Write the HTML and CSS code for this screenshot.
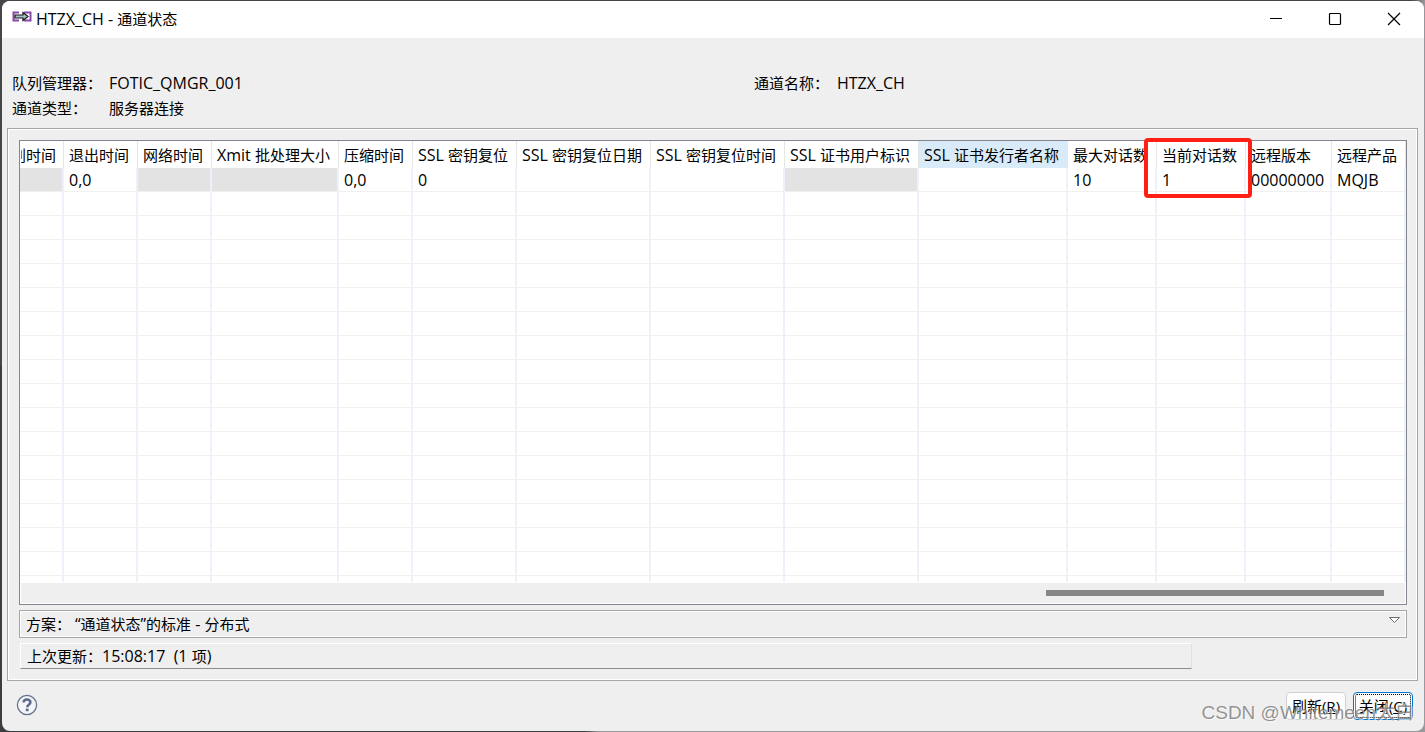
FILE: index.html
```html
<!DOCTYPE html>
<html lang="zh-CN">
<head>
<meta charset="utf-8">
<title>HTZX_CH - 通道状态</title>
<link rel="stylesheet" href="styles.css">
</head>
<body>
<main class="window">
  <header class="titlebar">
    <svg class="app-icon" width="20" height="12" viewBox="0 0 20 12" aria-hidden="true">
      <path d="M7 1.500H1.500V9.500H7M12 1.500H18.500V9.500H12" fill="none" stroke="#8a49a8" stroke-width="2"/>
      <path d="M3 4H11V1.500L16 5.500L11 9.500V7H3Z" fill="#a9bfc7" stroke="#161616" stroke-width="1.200"/>
    </svg>
    <h1 class="title"><span class="latin">HTZX_CH - </span>通道状态</h1>
    <div class="window-controls">
      <button type="button" class="control" aria-label="最小化"><svg width="14" height="14" viewBox="0 0 14 14"><path d="M1 6.500H13" stroke="#000"/></svg></button>
      <button type="button" class="control" aria-label="最大化"><svg width="14" height="14" viewBox="0 0 14 14"><rect x="1.500" y="1.500" width="11" height="11" rx="1" fill="none" stroke="#000" stroke-width="1.200"/></svg></button>
      <button type="button" class="control" aria-label="关闭窗口"><svg width="14" height="14" viewBox="0 0 14 14"><path d="M1 1L13 13M13 1L1 13" stroke="#000" stroke-width="1.200"/></svg></button>
    </div>
  </header>

  <section class="info">
    <dl class="facts">
      <dt>队列管理器：</dt><dd class="latin">FOTIC_QMGR_001</dd>
      <dt>通道类型：</dt><dd>服务器连接</dd>
    </dl>
    <dl class="facts facts-narrow">
      <dt>通道名称：</dt><dd class="latin">HTZX_CH</dd>
    </dl>
  </section>

  <section class="group">
    <div class="grid-frame">
      <div class="grid-view">
        <table class="grid">
          <colgroup>
            <col class="w44"><col class="w74"><col class="w74"><col class="w127"><col class="w74"><col class="w104">
            <col class="w134"><col class="w134"><col class="w134"><col class="w149"><col class="w89"><col class="w89"><col class="w86"><col>
          </colgroup>
          <thead>
            <tr>
              <th class="clipped"><div class="clip">别时间</div></th><th>退出时间</th><th>网络时间</th><th><span class="latin">Xmit </span>批处理大小</th><th>压缩时间</th><th><span class="latin">SSL </span>密钥复位</th>
              <th><span class="latin">SSL </span>密钥复位日期</th><th><span class="latin">SSL </span>密钥复位时间</th><th><span class="latin">SSL </span>证书用户标识</th><th class="hot"><span class="latin">SSL </span>证书发行者名称</th><th>最大对话数</th><th class="marked">当前对话数<span class="marker"></span></th><th>远程版本</th><th>远程产品</th>
            </tr>
          </thead>
          <tbody>
            <tr class="values">
              <td class="na"></td><td>0,0</td><td class="na"></td><td class="na"></td><td>0,0</td><td>0</td><td></td><td></td><td class="na"></td><td></td><td>10</td><td>1</td><td>00000000</td><td>MQJB</td>
            </tr>
            <tr><td></td><td></td><td></td><td></td><td></td><td></td><td></td><td></td><td></td><td></td><td></td><td></td><td></td><td></td></tr>
            <tr><td></td><td></td><td></td><td></td><td></td><td></td><td></td><td></td><td></td><td></td><td></td><td></td><td></td><td></td></tr>
            <tr><td></td><td></td><td></td><td></td><td></td><td></td><td></td><td></td><td></td><td></td><td></td><td></td><td></td><td></td></tr>
            <tr><td></td><td></td><td></td><td></td><td></td><td></td><td></td><td></td><td></td><td></td><td></td><td></td><td></td><td></td></tr>
            <tr><td></td><td></td><td></td><td></td><td></td><td></td><td></td><td></td><td></td><td></td><td></td><td></td><td></td><td></td></tr>
            <tr><td></td><td></td><td></td><td></td><td></td><td></td><td></td><td></td><td></td><td></td><td></td><td></td><td></td><td></td></tr>
            <tr><td></td><td></td><td></td><td></td><td></td><td></td><td></td><td></td><td></td><td></td><td></td><td></td><td></td><td></td></tr>
            <tr><td></td><td></td><td></td><td></td><td></td><td></td><td></td><td></td><td></td><td></td><td></td><td></td><td></td><td></td></tr>
            <tr><td></td><td></td><td></td><td></td><td></td><td></td><td></td><td></td><td></td><td></td><td></td><td></td><td></td><td></td></tr>
            <tr><td></td><td></td><td></td><td></td><td></td><td></td><td></td><td></td><td></td><td></td><td></td><td></td><td></td><td></td></tr>
            <tr><td></td><td></td><td></td><td></td><td></td><td></td><td></td><td></td><td></td><td></td><td></td><td></td><td></td><td></td></tr>
            <tr><td></td><td></td><td></td><td></td><td></td><td></td><td></td><td></td><td></td><td></td><td></td><td></td><td></td><td></td></tr>
            <tr><td></td><td></td><td></td><td></td><td></td><td></td><td></td><td></td><td></td><td></td><td></td><td></td><td></td><td></td></tr>
            <tr><td></td><td></td><td></td><td></td><td></td><td></td><td></td><td></td><td></td><td></td><td></td><td></td><td></td><td></td></tr>
            <tr><td></td><td></td><td></td><td></td><td></td><td></td><td></td><td></td><td></td><td></td><td></td><td></td><td></td><td></td></tr>
            <tr><td></td><td></td><td></td><td></td><td></td><td></td><td></td><td></td><td></td><td></td><td></td><td></td><td></td><td></td></tr>
            <tr class="partial"><td></td><td></td><td></td><td></td><td></td><td></td><td></td><td></td><td></td><td></td><td></td><td></td><td></td><td></td></tr>
          </tbody>
        </table>
      </div>
      <div class="scrollbar"><div class="thumb"></div></div>
    </div>
    <div class="scheme">
      <span>方案： <span class="latin">“</span>通道状态<span class="latin">”</span>的标准<span class="latin"> - </span>分布式</span>
      <button type="button" class="scheme-menu" aria-label="方案菜单"><svg width="11" height="7" viewBox="0 0 11 7"><path d="M0.500 0.500H10.500L5.500 5.500Z" fill="#fff" stroke="#6e6e6e"/></svg></button>
    </div>
    <div class="status">上次更新：<span class="latin">15:08:17&nbsp; (1 </span>项<span class="latin">)</span></div>
  </section>

  <footer class="footer">
    <button type="button" class="help" aria-label="帮助">
      <svg width="22" height="22" viewBox="0 0 22 22"><circle cx="11" cy="11" r="9.600" fill="#f4f5f7" stroke="#66758f" stroke-width="1.300"/><path d="M7.600 8.600C7.600 4.600 14.400 4.600 14.400 8.300C14.400 10.700 11.200 10.700 11.200 13.200" fill="none" stroke="#5c6c8c" stroke-width="2.600"/><rect x="9.800" y="14.600" width="2.800" height="2.600" fill="#5c6c8c"/></svg>
    </button>
    <div class="actions">
      <button type="button" class="button">刷新(<u>R</u>)</button>
      <button type="button" class="button focused">关闭(<u>C</u>)</button>
    </div>
    <div class="watermark">CSDN @Whitemeen太白</div>
  </footer>
</main>
</body>
</html>
```

FILE: styles.css
```css
* { box-sizing: border-box; }

body {
  margin: 0;
  padding: 1px 1px 1px 2px;
  min-height: 100vh;
  display: flex;
  background: linear-gradient(to right, #3c3d40 41%, #9a9a9e 42%) bottom / 100% 50% no-repeat, linear-gradient(to right, #45464a 99%, #9a9a9e 100%);
  color: #000;
  font: 15px/20px "Open Sans", "Noto Sans CJK SC", sans-serif;
}

button {
  margin: 0;
  padding: 0;
  border: 0;
  background: none;
  color: inherit;
  font: inherit;
}

svg { display: block; }

.latin { font-size: 16px; }

.window {
  flex: 1;
  min-width: 0;
  display: flex;
  flex-direction: column;
  overflow: hidden;
  border-radius: 8px;
  background: #efefef;
}

.titlebar {
  display: flex;
  align-items: center;
  height: 37px;
  padding: 0 1px 2px 10px;
  background: #fff;
}

.app-icon { margin-bottom: 3px; }

.title {
  flex: 1;
  margin: 0 0 0 4px;
  font-size: 15px;
  font-weight: 400;
}

.window-controls { display: flex; }

.control {
  display: grid;
  place-items: center;
  width: 59px;
  height: 35px;
}

.info {
  display: grid;
  grid-template-columns: 1fr 1fr;
  column-gap: 82px;
  padding: 33px 10px 7px;
}

.facts {
  display: grid;
  grid-template-columns: 97px 1fr;
  align-content: start;
  margin: 0;
  line-height: 25px;
}

.facts-narrow { grid-template-columns: 83px 1fr; }
.facts dt { white-space: nowrap; }
.facts dd { margin: 0; }

.group {
  flex: 1;
  display: flex;
  flex-direction: column;
  margin: 0 6px 0 5px;
  padding: 11px 10px 10px 11px;
  border: 1px solid #a5a6ac;
  box-shadow: inset 1px 1px #fff, inset -1px -1px #fff;
}

.grid-frame {
  flex: 1;
  display: flex;
  flex-direction: column;
  border: 1px solid #83858f;
  background: #fff;
}

.grid-view { flex: 1; }

.grid {
  width: 100%;
  table-layout: fixed;
  border-collapse: separate;
  border-spacing: 0;
}

.grid th,
.grid td {
  height: 24px;
  padding: 0 0 0 5px;
  border-right: 2px solid #edf2fa;
  border-bottom: 1px solid #f0f0f0;
  text-align: left;
  font-weight: 400;
  white-space: nowrap;
}

.grid th {
  height: 27px;
  padding-top: 1px;
  border-right: 1px solid #e5e5e5;
  border-bottom: 0;
}

.grid .values td { font-size: 16px; }

.grid .clipped { padding-left: 1px; }
.clip {
  display: flex;
  justify-content: flex-end;
  overflow: hidden;
  padding-right: 7px;
}

.grid .hot { background: #d9ebf9; border-color: #d9ebf9; }
.grid .na { background: #e3e3e3 padding-box; }
.grid .partial td { height: 6px; border-bottom: 0; }

.w44 { width: 44px; }
.w74 { width: 74px; }
.w86 { width: 86px; }
.w89 { width: 89px; }
.w104 { width: 104px; }
.w127 { width: 127px; }
.w134 { width: 134px; }
.w149 { width: 149px; }

.grid .marked { position: relative; }
.marker {
  position: absolute;
  top: -3px;
  left: -13px;
  width: 108px;
  height: 60px;
  border: 4px solid #ff2015;
  border-radius: 4px;
}

.scrollbar {
  display: flex;
  justify-content: flex-end;
  align-items: center;
  height: 20px;
  margin: 0 1px 1px;
  padding-right: 21px;
  background: #efefef;
}

.thumb {
  width: 338px;
  height: 6px;
  background: #868686;
}

.scheme {
  display: flex;
  justify-content: space-between;
  align-items: flex-start;
  height: 28px;
  margin-top: 5px;
  padding: 3px 6px;
  border: 1px solid #a5a6ac;
  box-shadow: inset 1px 1px #fff, inset -1px -1px #fff;
}

.scheme-menu { padding-top: 3px; }

.status {
  height: 26px;
  margin: 5px 215px 1px 1px;
  padding: 2px 6px;
  border: 1px solid #fff;
  border-right-color: #e0e0e0;
  border-bottom-color: #8c8c8c;
}

.footer {
  position: relative;
  display: flex;
  justify-content: space-between;
  align-items: flex-start;
  height: 50px;
  padding: 11px 11px 0 14px;
}

.help { padding-top: 2px; }
.actions { display: flex; gap: 7px; }

.button {
  width: 60px;
  height: 28px;
  border: 1px solid #d0d0d0;
  border-radius: 4px;
  background: #fdfdfd;
  white-space: nowrap;
}

.focused {
  border-color: #0078d4;
  outline: 1px dotted #000;
  outline-offset: -3px;
}

.watermark {
  position: absolute;
  right: 10px;
  bottom: 6px;
  color: rgba(115, 115, 115, 0.75);
  font: 19px/24px "Liberation Sans", "Noto Sans CJK SC", sans-serif;
  text-shadow: 1px 1px rgba(255, 255, 255, 0.6);
  white-space: nowrap;
  pointer-events: none;
}
```
